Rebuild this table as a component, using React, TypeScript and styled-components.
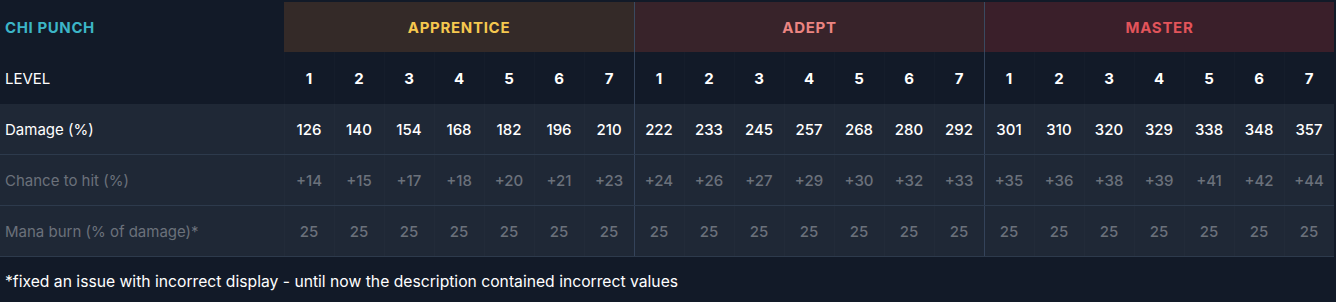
import React from 'react';
import styled, { createGlobalStyle } from 'styled-components';

const GlobalStyle = createGlobalStyle`
  html, body {
    margin: 0;
    padding: 0;
    background: #121a28;
  }
  body {
    font-family: Inter, "Noto Sans", sans-serif;
    color: #ffffff;
  }
`;

const tiers = [
  { name: 'APPRENTICE', bg: '#342a28', color: '#f6c84f' },
  { name: 'ADEPT', bg: '#38232a', color: '#ec8582' },
  { name: 'MASTER', bg: '#3a1f2a', color: '#e2545a' },
];

const rows = [
  {
    label: 'Damage (%)',
    muted: false,
    values: [126, 140, 154, 168, 182, 196, 210, 222, 233, 245, 257, 268, 280, 292, 301, 310, 320, 329, 338, 348, 357].map(String),
  },
  {
    label: 'Chance to hit (%)',
    muted: true,
    values: [14, 15, 17, 18, 20, 21, 23, 24, 26, 27, 29, 30, 32, 33, 35, 36, 38, 39, 41, 42, 44].map((v) => `+${v}`),
  },
  {
    label: 'Mana burn (% of damage)*',
    muted: true,
    values: Array(21).fill('25'),
  },
];

const Wrapper = styled.div`
  width: 1336px;
  padding-top: 2px;
`;

const Grid = styled.div`
  display: grid;
  grid-template-columns: 284px repeat(21, 50px);
`;

const SkillName = styled.div`
  height: 50px;
  display: flex;
  align-items: center;
  padding-left: 5px;
  font-size: 15px;
  font-weight: 700;
  letter-spacing: 0.6px;
  color: #3cb5c7;
`;

const TierBand = styled.div<{ $bg: string; $color: string; $first: boolean }>`
  grid-column: span 7;
  height: 50px;
  display: flex;
  align-items: center;
  justify-content: center;
  background: ${(p) => p.$bg};
  color: ${(p) => p.$color};
  font-size: 15px;
  font-weight: 700;
  letter-spacing: 0.7px;
  border-left: ${(p) => (p.$first ? 'none' : '1px solid #3a4a60')};
  box-sizing: border-box;
`;

const RowLabel = styled.div<{ $muted?: boolean; $shaded?: boolean }>`
  display: flex;
  align-items: center;
  padding-left: 5px;
  font-size: 15px;
  color: ${(p) => (p.$muted ? '#6b717b' : '#ffffff')};
  background: ${(p) => (p.$shaded ? '#1f2836' : 'transparent')};
  border-bottom: ${(p) => (p.$shaded ? '1px solid #2d3a4c' : 'none')};
  height: ${(p) => (p.$shaded ? '50px' : '52px')};
`;

const Cell = styled.div<{ $muted?: boolean; $shaded?: boolean; $bold?: boolean; $divider?: boolean }>`
  display: flex;
  align-items: center;
  justify-content: center;
  font-size: 15px;
  font-weight: ${(p) => (p.$bold ? 700 : 500)};
  color: ${(p) => (p.$muted ? '#6b717b' : '#ffffff')};
  background: ${(p) => (p.$shaded ? '#1f2836' : 'transparent')};
  border-bottom: ${(p) => (p.$shaded ? '1px solid #2d3a4c' : 'none')};
  height: ${(p) => (p.$shaded ? '50px' : '52px')};
  box-shadow: ${(p) => (p.$divider ? 'inset 1px 0 0 #34435a' : 'inset 1px 0 0 rgba(255,255,255,0.015)')};
`;

const Footnote = styled.div`
  padding: 15px 5px 0;
  font-size: 15.7px;
  color: #ffffff;
`;

export default function App() {
  const levels = tiers.flatMap(() => [1, 2, 3, 4, 5, 6, 7]);

  return (
    <Wrapper>
      <GlobalStyle />
      <Grid>
        <SkillName>CHI PUNCH</SkillName>
        {tiers.map((t, i) => (
          <TierBand key={t.name} $bg={t.bg} $color={t.color} $first={i === 0}>
            {t.name}
          </TierBand>
        ))}

        <RowLabel>LEVEL</RowLabel>
        {levels.map((lv, i) => (
          <Cell key={`lv${i}`} $bold $divider={i === 7 || i === 14}>
            {lv}
          </Cell>
        ))}

        {rows.map((row) => (
          <React.Fragment key={row.label}>
            <RowLabel $muted={row.muted} $shaded>
              {row.label}
            </RowLabel>
            {row.values.map((v, i) => (
              <Cell key={i} $muted={row.muted} $shaded $divider={i === 7 || i === 14}>
                {v}
              </Cell>
            ))}
          </React.Fragment>
        ))}
      </Grid>
      <Footnote>*fixed an issue with incorrect display - until now the description contained incorrect values</Footnote>
    </Wrapper>
  );
}
